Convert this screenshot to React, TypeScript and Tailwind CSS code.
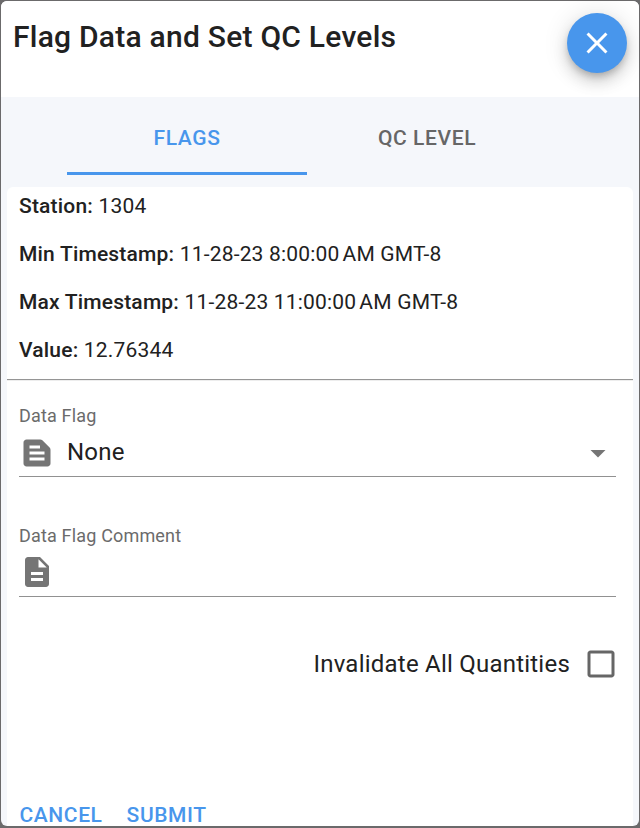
import type { ReactNode } from 'react';

const details = [
  { label: 'Station', value: '1304' },
  { label: 'Min Timestamp', value: '11-28-23 8:00:00', rest: 'AM GMT-8' },
  { label: 'Max Timestamp', value: '11-28-23 11:00:00', rest: 'AM GMT-8' },
  { label: 'Value', value: '12.76344' },
];

const icons = {
  close: 'M19 6.41L17.59 5 12 10.59 6.41 5 5 6.41 10.59 12 5 17.59 6.41 19 12 13.41 17.59 19 19 17.59 13.41 12z',
  snippet: 'M20.41 8.41l-4.83-4.83c-.37-.37-.88-.58-1.41-.58H5c-1.1 0-2 .9-2 2v14c0 1.1.9 2 2 2h14c1.1 0 2-.9 2-2V9.83c0-.53-.21-1.04-.59-1.42zM7 7h7v2H7V7zm10 10H7v-2h10v2zm0-4H7v-2h10v2z',
  description: 'M14 2H6c-1.1 0-1.99.9-1.99 2L4 20c0 1.1.89 2 1.99 2H18c1.1 0 2-.9 2-2V8l-6-6zm2 16H8v-2h8v2zm0-4H8v-2h8v2zm-3-5V3.5L18.5 9H13z',
  dropDown: 'M7 10l5 5 5-5z',
  checkbox: 'M19 5v14H5V5h14m0-2H5c-1.1 0-2 .9-2 2v14c0 1.1.9 2 2 2h14c1.1 0 2-.9 2-2V5c0-1.1-.9-2-2-2z',
};

function Icon({ name, className }: { name: keyof typeof icons; className: string }) {
  return (
    <svg viewBox="0 0 24 24" fill="currentColor" className={`size-9 shrink-0 ${className}`}>
      <path d={icons[name]} />
    </svg>
  );
}

function Field({ label, children }: { label: string; children: ReactNode }) {
  return (
    <div className="flex flex-col h-[75px] mb-[45px] border-b border-[#919191]">
      <p className="h-[26px] text-[18px] leading-7 tracking-[0.17px] text-[#6b6b6b]">{label}</p>
      <div className="flex items-center h-12">{children}</div>
    </div>
  );
}

function App() {
  return (
    <div className="w-[640px] h-[828px] px-px pt-px pb-0.5 bg-[#6b6a6b] overflow-hidden font-['Roboto',sans-serif] text-[#212121]">
      <div className="flex flex-col h-full bg-[#f5f7fb] rounded-md overflow-hidden">
        <div className="flex justify-between h-24 pl-3 pr-3 pt-3 bg-white overflow-hidden">
          <h2 className="text-[30px] leading-[48px] font-medium tracking-[0.24px]">Flag Data and Set QC Levels</h2>
          <button className="flex items-center justify-center size-[60px] rounded-full bg-[#4896ec] shadow-[0_4.5px_7.5px_-1.5px_rgba(0,0,0,0.2),0_9px_15px_0_rgba(0,0,0,0.14),0_1.5px_27px_0_rgba(0,0,0,0.12)]">
            <Icon name="close" className="text-white" />
          </button>
        </div>
        <div className="flex h-[90px] pl-[66px] pt-1.5 pb-3 text-[21px] font-medium tracking-[0.6px]">
          <button className="w-60 h-[72px] pt-0.5 border-b-3 border-[#4896ec] text-[#4896ec]">FLAGS</button>
          <button className="w-60 h-[72px] pt-0.5 border-b-3 border-transparent text-[#666]">QC LEVEL</button>
        </div>
        <div className="flex flex-col flex-1 mx-1.5 bg-white rounded-t-md">
          <div className="h-48 pl-3 text-[21px] tracking-[0.19px]">
            {details.map((item) => (
              <p key={item.label} className="h-12 leading-[38px]">
                <span className="font-medium">{item.label}:</span> {item.value}
                {item.rest && <span className="ml-[3px]">{item.rest}</span>}
              </p>
            ))}
          </div>
          <hr className="border-t border-b border-t-[#959595] border-b-[#ededed]" />
          <div className="flex flex-col pl-3 pr-[17px] pt-[21px]">
            <Field label="Data Flag">
              <Icon name="snippet" className="mt-0.5 text-[#757575]" />
              <span className="flex-1 pl-3 text-2xl tracking-[0.225px]">None</span>
              <Icon name="dropDown" className="mt-0.5 text-[#757575]" />
            </Field>
            <Field label="Data Flag Comment">
              <Icon name="description" className="text-[#757575]" />
            </Field>
          </div>
          <label className="flex items-center justify-end h-[43px] gap-[13px] pr-3.5 text-2xl tracking-[0.225px]">
            Invalidate All Quantities
            <Icon name="checkbox" className="text-[#666]" />
          </label>
          <div className="flex h-[23px] gap-6 mt-auto pl-[12.5px] text-[21px] leading-6 font-medium tracking-[0.6px] text-[#4896ec]">
            <button>CANCEL</button>
            <button>SUBMIT</button>
          </div>
        </div>
      </div>
    </div>
  );
}

export default App;
